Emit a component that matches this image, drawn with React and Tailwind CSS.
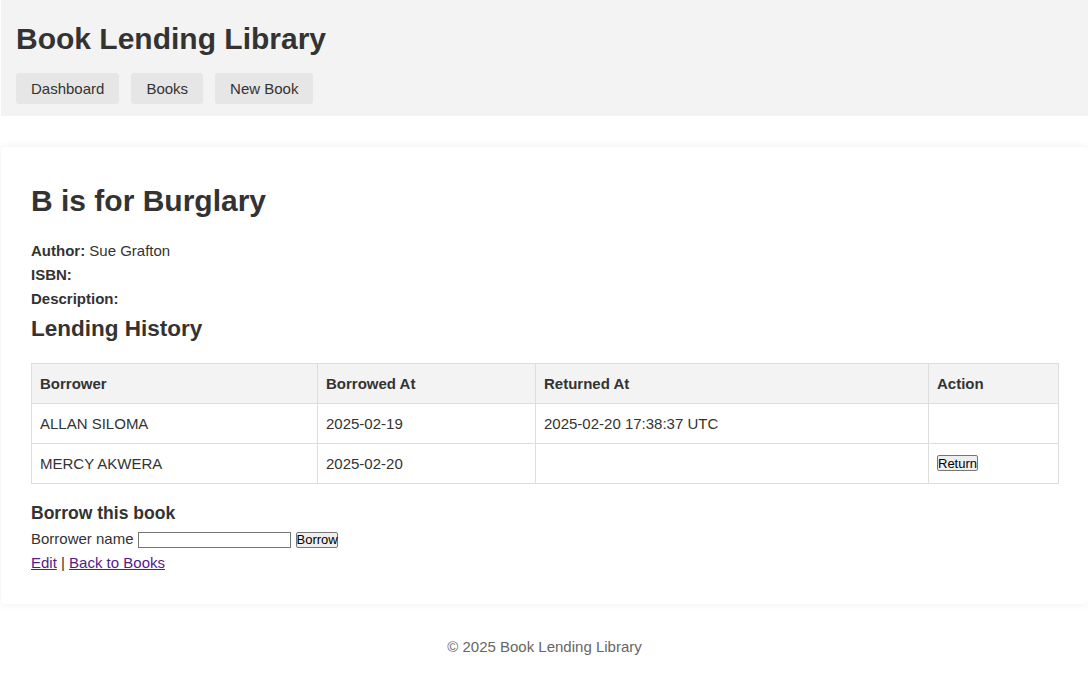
export default function App() {
  const rows = [
    { id: 1, name: "ALLAN SILOMA", borrowed: "2025-02-19", returned: "2025-02-20 17:38:37 UTC" },
    { id: 2, name: "MERCY AKWERA", borrowed: "2025-02-20", returned: "" },
  ];

  return (
    <div className="min-h-screen overflow-x-hidden bg-white pl-[1px] font-['Liberation_Sans',Arial,sans-serif] text-[15px] text-[#333]">
      <header className="bg-[#f3f3f3] px-[15px] pt-[22px] pb-3">
        <h1 className="m-0 text-[30px] leading-[34px] font-bold">Book Lending Library</h1>
        <nav className="mt-[17px] flex gap-[12px]">
          <a href="#" className="flex h-[31px] items-center rounded-[3px] bg-[#e6e6e6] px-[15px] pt-[1px] text-[#333]">Dashboard</a>
          <a href="#" className="flex h-[31px] items-center rounded-[3px] bg-[#e6e6e6] px-[15px] pt-[1px] text-[#333]">Books</a>
          <a href="#" className="flex h-[31px] items-center rounded-[3px] bg-[#e6e6e6] px-[15px] pt-[1px] text-[#333]">New Book</a>
        </nav>
      </header>

      <main className="mt-[31px] rounded-[4px] bg-white pt-[37px] pr-[29px] pb-[30px] pl-[30px] shadow-[0_0_8px_rgba(0,0,0,0.07)]">
        <h1 className="text-[30px] leading-[34px] font-bold">B is for Burglary</h1>

        <div className="mt-[21px] leading-[24px]">
          <p><strong>Author:</strong> Sue Grafton</p>
          <p><strong>ISBN:</strong></p>
          <p><strong>Description:</strong></p>
        </div>

        <h2 className="mt-[5px] text-[22.5px] leading-[26px] font-bold">Lending History</h2>

        <table className="mt-[21px] w-full table-fixed border-collapse">
          <colgroup>
            <col className="w-[286px]" />
            <col className="w-[218px]" />
            <col className="w-[393px]" />
            <col />
          </colgroup>
          <thead className="bg-[#f3f3f3]">
            <tr>
              <th className="border border-[#ddd] px-2 py-2 text-left leading-[23px] font-bold">Borrower</th>
              <th className="border border-[#ddd] px-2 py-2 text-left leading-[23px] font-bold">Borrowed At</th>
              <th className="border border-[#ddd] px-2 py-2 text-left leading-[23px] font-bold">Returned At</th>
              <th className="border border-[#ddd] px-2 py-2 text-left leading-[23px] font-bold">Action</th>
            </tr>
          </thead>
          <tbody>
            {rows.map(r => (
              <tr key={r.id}>
                <td className="border border-[#ddd] px-2 py-2 leading-[23px]">{r.name}</td>
                <td className="border border-[#ddd] px-2 py-2 leading-[23px]">{r.borrowed}</td>
                <td className="border border-[#ddd] px-2 py-2 leading-[23px]">{r.returned}</td>
                <td className="border border-[#ddd] px-2 py-2 leading-[23px]">
                  {!r.returned && (
                    <button className="h-[16px] -translate-y-[2px] rounded-[2px] border border-[#767676] bg-[#efefef] px-0 align-middle text-[13px] leading-[13px] text-black">Return</button>
                  )}
                </td>
              </tr>
            ))}
          </tbody>
        </table>

        <h3 className="mt-[17px] text-[17.55px] leading-[24px] font-bold">Borrow this book</h3>
        <form className="mt-[3px] flex h-[23px] items-center" onSubmit={e => e.preventDefault()}>
          <label>Borrower name</label>
          <input type="text" className="ml-[4px] h-[16px] w-[153px] border border-[#767676] bg-white text-[13px]" />
          <button type="submit" className="ml-[5px] h-[16px] w-[42px] rounded-[2px] border border-[#767676] bg-[#efefef] px-0 text-[13px] leading-[13px] text-black">Borrow</button>
        </form>
        <div className="leading-[23px]">
          <a href="#" className="text-[#551a8b] underline">Edit</a> | <a href="#" className="text-[#551a8b] underline">Back to Books</a>
        </div>
      </main>

      <footer className="pt-[31px] text-center leading-[24px] text-[#666]">© 2025 Book Lending Library</footer>
    </div>
  );
}
